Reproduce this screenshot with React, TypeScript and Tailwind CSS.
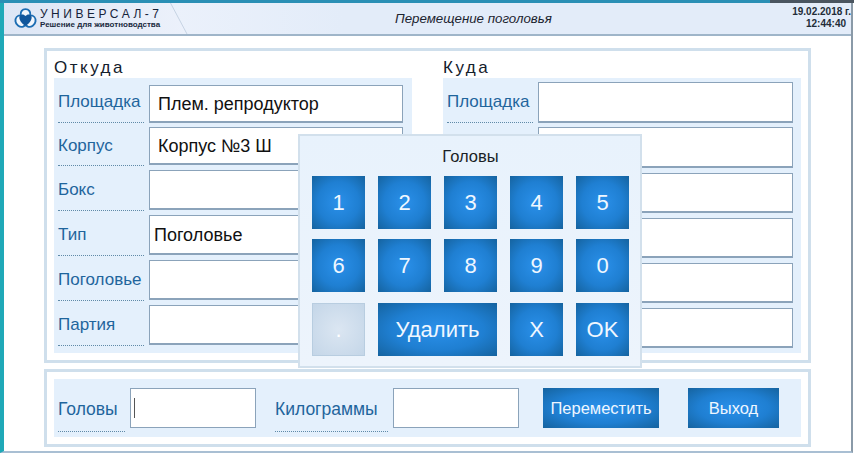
const Logo = () => (
  <svg width="23" height="21" viewBox="0 0 24 22" className="shrink-0">
    <path
      d="M12 1.200 C15.500 1.200 17.500 4 17 7.200 C20.500 7.800 23 10.500 22.500 14 C22 18 18 20.500 14.500 19.500 L12 18 L9.500 19.500 C6 20.500 2 18 1.500 14 C1 10.500 3.500 7.800 7 7.200 C6.500 4 8.500 1.200 12 1.200 Z"
      fill="#f2f6fc"
      stroke="#1c6db3"
      strokeWidth="2"
      strokeLinejoin="round"
    />
    <path d="M5.800 8 C8.500 6 10.500 7 12 8.500 C13.500 7 15.500 6 18.200 8 C19.500 12 15.800 16.500 12 18.500 C8.200 16.500 4.500 12 5.800 8 Z" fill="#12579c" />
  </svg>
);

type Row = { label?: string; value?: string; inset?: string; row: string; box: string; labelPad?: string };

const leftRows: Row[] = [
  { label: "Площадка", value: "Плем. репродуктор", row: "h-[45px]", box: "mt-[7px] h-[38px]", labelPad: "pt-[3px]" },
  { label: "Корпус", value: "Корпус №3 Ш", row: "h-[43px]", box: "mt-[4px] h-[38px]" },
  { label: "Бокс", row: "h-[45px]", box: "mt-[4px] h-[40px]" },
  { label: "Тип", value: "Поголовье", inset: "pl-[4px]", row: "h-[45px]", box: "mt-[4px] h-[40px]" },
  { label: "Поголовье", row: "h-[45px]", box: "mt-[4px] h-[40px]" },
  { label: "Партия", row: "h-[45px]", box: "mt-[4px] h-[40px]" },
];

// the other labels of this column are covered by the number pad
const rightRows: Row[] = [
  { label: "Площадка", row: "h-[45px]", box: "mt-[4px] h-[41px]", labelPad: "pt-[3px]" },
  { row: "h-[45px]", box: "mt-[4px] h-[41px]" },
  { row: "h-[45px]", box: "mt-[5px] h-[40px]" },
  { row: "h-[45px]", box: "mt-[5px] h-[40px]" },
  { row: "h-[45px]", box: "mt-[5px] h-[40px]" },
  { row: "h-[45px]", box: "mt-[5px] h-[40px]" },
];

const Field = ({ label, value, inset = "pl-2", row, box, labelPad = "pt-[4px]" }: Row) => (
  <div className={`flex gap-[5px] ${row}`}>
    <div className={`w-[86px] h-full flex items-center border-b border-dotted border-[#5f8aa8] text-[17px] text-[#1f659c] whitespace-nowrap ${labelPad}`}>
      {label}
    </div>
    <div className={`flex-1 min-w-0 bg-white border border-[#8ba3ba] border-b-2 flex items-center pt-[1px] text-[18px] text-[#111] ${inset} ${box}`}>
      {value}
    </div>
  </div>
);

const Key = ({ children, className = "w-[53px]", disabled = false }: { children: React.ReactNode; className?: string; disabled?: boolean }) => (
  <div
    className={`h-[53px] flex items-center justify-center text-[22px] ${className} ${
      disabled
        ? "text-white border border-[#b8cde0] bg-[radial-gradient(ellipse,#dbe6f2_0%,#c4d6e8_100%)]"
        : "text-[#f0f7ff] bg-[radial-gradient(ellipse,#2a90ea_0%,#1f7fd2_55%,#15639f_100%)]"
    }`}
  >
    {children}
  </div>
);

const ActionButton = ({ children, className }: { children: React.ReactNode; className: string }) => (
  <div className={`h-[40px] flex items-center justify-center text-[16.500px] text-[#eef6ff] bg-[radial-gradient(ellipse,#2a90ea_0%,#1f7fd2_55%,#15639f_100%)] ${className}`}>
    {children}
  </div>
);

export default function App() {
  return (
    <div className="relative w-[854px] h-[454px] overflow-hidden bg-white font-['Liberation_Sans',sans-serif]">
      <div className="h-[3px] flex">
        <div className="w-[770px] bg-[#2a8fb5]" />
        <div className="flex-1 bg-[#4a5560]" />
      </div>
      <div className="h-[450px] w-[853px] border-l-[4px] border-l-[#1fa9b8] border-r-[2px] border-r-[#8a9aa8] border-b-2 border-b-[#a9bfd3]">
        {/* header */}
        <div className="relative h-[33px] bg-[linear-gradient(90deg,#f3f6fd,#e3ecf9_40%)] border-b-2 border-[#9fb5c9] flex items-center">
          <div className="w-[183px] h-full bg-[linear-gradient(90deg,#dde6f5,#ecf1fb)] [clip-path:polygon(0_0,91%_0,100%_100%,0_100%)] flex items-center pl-[10px] gap-[3px] shrink-0">
            <Logo />
            <div className="leading-none">
              <div className="text-[12px] tracking-[3.5px] text-[#16233a] whitespace-nowrap">УНИВЕРСАЛ-7</div>
              <div className="text-[8px] font-bold text-[#1a2a40] whitespace-nowrap mt-[1px]">Решение для животноводства</div>
            </div>
          </div>
          <svg width="18" height="31" viewBox="0 0 18 31" className="absolute left-[166px] top-0">
            <line x1="0.500" y1="0" x2="17" y2="31" stroke="#c6d3e3" strokeWidth="1" />
          </svg>
          <div className="ml-[208px] text-[13.300px] italic text-[#1c2430] whitespace-nowrap">Перемещение поголовья</div>
          <div className="ml-auto mt-[-2px] text-[10px] font-bold text-[#222c38] text-right leading-[12px]">
            <div>19.02.2018 г.</div>
            <div className="pr-[5px]">12:44:40</div>
          </div>
        </div>

        <div className="pl-[40px] pt-[12px] w-[807px]">
          {/* source and target */}
          <div className="h-[315px] border-[3px] border-[#cfdfec] px-[7px] pt-[7px] flex justify-between">
            {[
              { title: "Откуда", rows: leftRows, pad: "pr-[9px]" },
              { title: "Куда", rows: rightRows, pad: "pr-[8px]" },
            ].map((col) => (
              <div key={col.title} className="w-[358px]">
                <div className="h-[20px] text-[17px] tracking-[2.500px] text-[#14202c] leading-[20px]">{col.title}</div>
                <div className={`h-[275px] bg-[#e4f0fc] pl-[4px] ${col.pad}`}>
                  {col.rows.map((r, i) => (
                    <Field key={i} {...r} />
                  ))}
                </div>
              </div>
            ))}
          </div>

          {/* bottom bar */}
          <div className="mt-[6px] h-[78px] border-[3px] border-[#cfdfec] px-[7px] py-[7px]">
            <div className="h-[58px] bg-[#e4f0fc] flex pl-[4px] pt-[9px]">
              <div className="w-[67px] h-[45px] flex items-center border-b border-dotted border-[#5f8aa8] text-[17.500px] text-[#1f659c] mt-[-1px]">Головы</div>
              <div className="ml-[5px] w-[126px] h-[40px] bg-white border border-[#8ba3ba] flex items-center pl-[3px]">
                <div className="w-[1px] h-[20px] bg-[#555]" />
              </div>
              <div className="ml-[19px] w-[113px] h-[45px] flex items-center border-b border-dotted border-[#5f8aa8] text-[17.500px] text-[#1f659c] mt-[-1px]">Килограммы</div>
              <div className="ml-[5px] w-[126px] h-[40px] bg-white border border-[#8ba3ba]" />
              <ActionButton className="ml-[24px] w-[116px]">Переместить</ActionButton>
              <ActionButton className="ml-[29px] w-[91px]">Выход</ActionButton>
            </div>
          </div>
        </div>
      </div>

      {/* number pad */}
      <div className="absolute left-[298px] top-[134px] w-[344px] h-[234px] bg-[linear-gradient(180deg,#e8f2fc,#edf4fc)] border-2 border-[#d2e0ec] pl-[12px] pt-[11px]">
        <div className="w-[317px] text-center text-[16.500px] text-[#1a1f26] leading-[18px]">Головы</div>
        <div className="mt-[11px] flex flex-col gap-[10px] w-[317px]">
          <div className="flex justify-between">
            {["1", "2", "3", "4", "5"].map((n) => <Key key={n}>{n}</Key>)}
          </div>
          <div className="flex justify-between">
            {["6", "7", "8", "9", "0"].map((n) => <Key key={n}>{n}</Key>)}
          </div>
          <div className="flex justify-between mt-[1px]">
            <Key disabled>.</Key>
            <Key className="w-[119px]">Удалить</Key>
            <Key>X</Key>
            <Key>OK</Key>
          </div>
        </div>
      </div>
    </div>
  );
}
